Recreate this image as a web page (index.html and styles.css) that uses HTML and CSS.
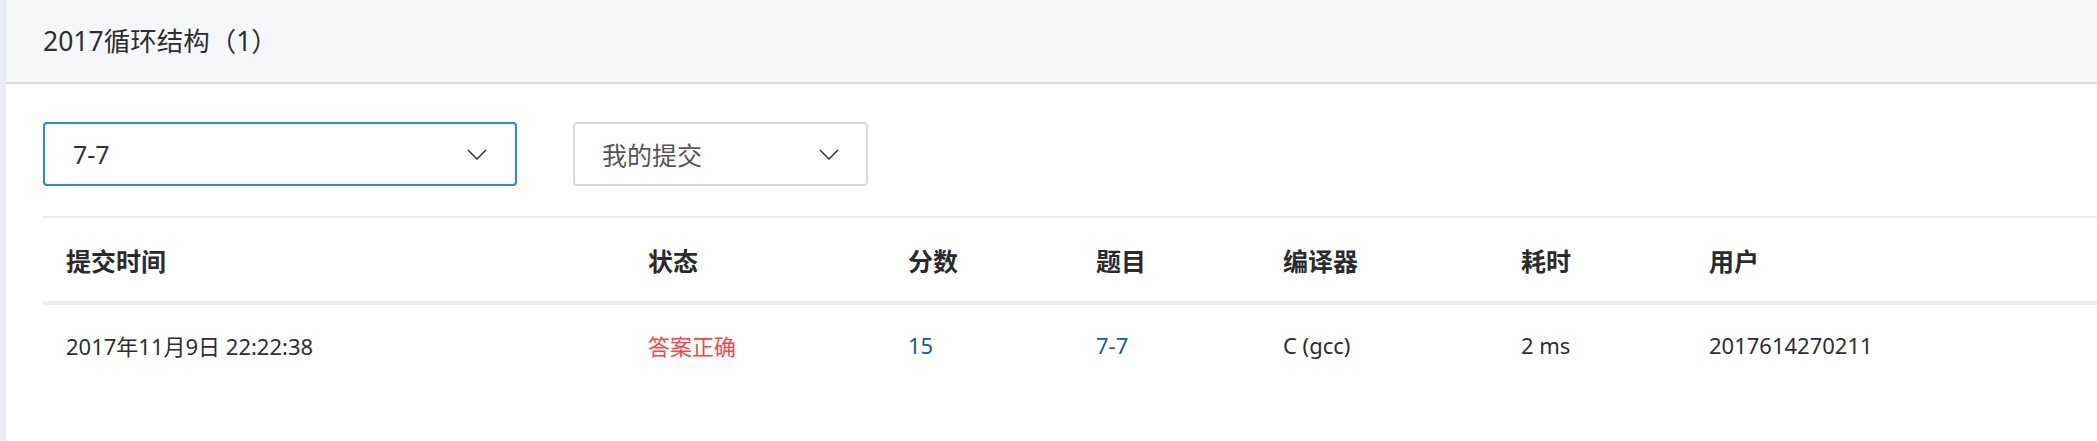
FILE: index.html
```html
<!DOCTYPE html>
<html lang="zh-CN">
<head>
<meta charset="utf-8">
<title>2017循环结构（1）</title>
<link rel="stylesheet" href="styles.css">
</head>
<body>
<div class="page">
  <div class="side-strip"></div>
  <div class="main">
    <div class="page-header">
      <h1 class="page-title">2017循环结构（1）</h1>
    </div>
    <div class="content">
      <div class="filters">
        <div class="select select-active">
          <span class="select-value">7-7</span>
          <svg class="chevron" width="20" height="11" viewBox="0 0 20 11"><polyline points="1,1 10,10 19,1" fill="none" stroke="#333" stroke-width="1.5"/></svg>
        </div>
        <div class="select select-plain">
          <span class="select-value muted">我的提交</span>
          <svg class="chevron" width="20" height="11" viewBox="0 0 20 11"><polyline points="1,1 10,10 19,1" fill="none" stroke="#333" stroke-width="1.5"/></svg>
        </div>
      </div>
      <table class="submissions">
        <colgroup>
          <col class="c-time">
          <col class="c-status">
          <col class="c-score">
          <col class="c-problem">
          <col class="c-compiler">
          <col class="c-cost">
          <col class="c-user">
        </colgroup>
        <thead>
          <tr>
            <th>提交时间</th>
            <th>状态</th>
            <th>分数</th>
            <th>题目</th>
            <th>编译器</th>
            <th>耗时</th>
            <th>用户</th>
          </tr>
        </thead>
        <tbody>
          <tr>
            <td>2017年11月9日 22:22:38</td>
            <td class="status-ok">答案正确</td>
            <td class="link">15</td>
            <td class="link">7-7</td>
            <td>C (gcc)</td>
            <td>2 ms</td>
            <td>2017614270211</td>
          </tr>
        </tbody>
      </table>
    </div>
  </div>
</div>
</body>
</html>
```

FILE: styles.css
```css
html, body {
  margin: 0;
  padding: 0;
  background: #ffffff;
}

body {
  font-family: "Noto Sans", "Noto Sans CJK SC", sans-serif;
  color: #333333;
  overflow: hidden;
}

.page {
  display: flex;
  min-height: 441px;
}

.side-strip {
  width: 6px;
  flex: 0 0 6px;
  background: #e9edf3;
}

.main {
  flex: 1;
  min-width: 0;
}

.page-header {
  height: 82px;
  background: #f6f7f9;
  border-bottom: 2px solid #d6d7da;
  padding-left: 37px;
}

.page-title {
  margin: 0;
  font-size: 26.5px;
  font-weight: normal;
  line-height: 82px;
  color: #2e2e2e;
}

.content {
  padding-left: 37px;
}

.filters {
  display: flex;
  gap: 56px;
  padding-top: 38px;
  padding-bottom: 30px;
  border-bottom: 2px solid #ececec;
}

.select {
  box-sizing: border-box;
  height: 64px;
  border-radius: 4px;
  display: flex;
  align-items: center;
  justify-content: space-between;
  background: #ffffff;
}

.select-active {
  width: 474px;
  border: 2px solid #2c88e8;
  padding: 0 28px;
}

.select-plain {
  width: 295px;
  border: 2px solid #dadada;
  padding: 0 27px;
}

.select-value {
  font-size: 25px;
  color: #333333;
}

.select-value.muted {
  color: #555555;
}

.chevron {
  display: block;
}

.submissions {
  width: 100%;
  table-layout: fixed;
  border-collapse: collapse;
}

.c-time { width: 582px; }
.c-status { width: 260px; }
.c-score { width: 188px; }
.c-problem { width: 187px; }
.c-compiler { width: 238px; }
.c-cost { width: 188px; }

.submissions th {
  height: 83px;
  padding: 0 0 0 23px;
  text-align: left;
  font-size: 25px;
  font-weight: bold;
  color: #2b2b2b;
  border-bottom: 4px solid #ebedf0;
  white-space: nowrap;
}

.submissions td {
  height: 80px;
  padding: 0 0 0 23px;
  font-size: 22px;
  color: #2e2e2e;
  white-space: nowrap;
}

.submissions td.status-ok {
  color: #f5474a;
}

.submissions td.link {
  color: #1a5a9e;
}
```
